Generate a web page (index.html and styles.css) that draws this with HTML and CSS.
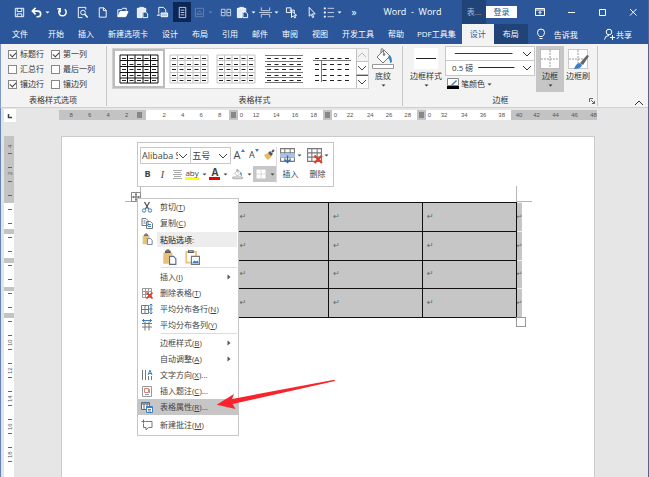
FILE: index.html
```html
<!DOCTYPE html>
<html lang="zh-CN">
<head>
<meta charset="utf-8">
<meta name="viewport" content="width=device-width, initial-scale=1">
<title>Word - Word</title>
<link rel="stylesheet" href="styles.css">
</head>
<body>
<svg class="defs" aria-hidden="true">
  <symbol id="caret" viewBox="0 0 5 3"><path d="M0.5 0.5h4L2.5 2.5z" fill="currentColor"/></symbol>
  <symbol id="chev" viewBox="0 0 10 6"><path d="M1 1l4 4 4-4" fill="none" stroke="currentColor"/></symbol>
  <symbol id="paste" viewBox="0 0 14 14"><path d="M2 3h8v3H7v7H2z" fill="#e8c078"/><path d="M4 3V2h1.300V1h1.500v1H8v1z" fill="none" stroke="#555"/><path d="M7.500 6.500h3.500l2 2v5H7.500z" fill="#fff" stroke="#566f94"/></symbol>
  <symbol id="wpaste" viewBox="0 0 14 14"><path d="M1.500 2.500h9V6H6.500v6.500h-5z" fill="#e4eaf4"/><path d="M4 3V1.500h4V3" fill="none" stroke="#fff"/><path d="M7.500 6.500h3l2 2v4h-5z" fill="#2b579a" stroke="#fff"/></symbol>
  <symbol id="grid" viewBox="0 0 40 30"><path d="M1 1h38v28H1zM1 6.500h38M1 12.500h38M1 18.500h38M1 24h38M8.500 1v28M16 1v28M24 1v28M31.500 1v28" fill="none" stroke="currentColor"/></symbol>
  <symbol id="dashes" viewBox="0 0 40 30"><path d="M3 4.500h37M3 10.500h37M3 15.500h37M3 21.500h37M3 26.500h37" fill="none" stroke="#222" stroke-dasharray="4 3.500"/></symbol>
  <symbol id="bucket" viewBox="0 0 20 16"><path d="M4 9l7-7 6 6-7 7z" fill="#fff" stroke="#777"/><path d="M8 5V2q0-2 2-1l1 5" fill="none" stroke="#777"/><circle cx="11" cy="6.500" r="1.200" fill="#777"/><path d="M16 7q3 1 3 7l-2 1q0-4-2-5z" fill="#3b7fc4"/></symbol>
  <symbol id="tbl" viewBox="0 0 16 16"><path d="M1.500 1.500h13v12h-13zM1.500 5.500h13M1.500 9.500h13M5.500 1.500v12M10.500 1.500v12" fill="#fff" stroke="#777"/></symbol>
  <symbol id="bord" viewBox="0 0 20 20"><path d="M0.500 0.500h19v19H0.500z" fill="#fff" stroke="#999" stroke-dasharray="1 1"/><path d="M10 1v18M1 10h18" stroke="#999" stroke-dasharray="2 1"/></symbol>
</svg>

<div class="app">
  <header class="titlebar">
    <div class="quick">
      <button aria-label="保存"><svg viewBox="0 0 14 14"><path d="M2.500 2.500h9v9h-9z"/><path d="M4.500 2.500v3.500h5V2.500M4.500 11.500v-3h5v3"/></svg></button>
      <button class="split" aria-label="撤消"><svg viewBox="0 0 14 14"><path d="M3 5.500h5.500a3 3 0 0 1 0 6H7M6 2L2.500 5.500 6 9" stroke-width="1.700"/></svg><svg class="caret"><use href="#caret"/></svg></button>
      <button aria-label="重复"><svg viewBox="0 0 14 14"><path d="M4.500 3.500a4 4 0 1 0 5 0M4.500 7V3H1.500" stroke-width="1.600"/></svg></button>
      <button aria-label="打印预览"><svg viewBox="0 0 14 14"><path d="M10.500 4V1.500h-8v11H7"/><circle cx="7.500" cy="7" r="2.500"/><path d="M9.500 9l3 3.500" stroke-width="1.600"/></svg></button>
      <button aria-label="新建"><svg viewBox="0 0 14 14"><path d="M3.500 2h5l2.500 2.500V12H3.500zM8 2v3h3"/></svg></button>
      <button aria-label="打开"><svg viewBox="0 0 14 14"><path d="M2 11.500V4h4l1-1.500h4V5" /><path d="M2 11.500L4.500 6H13l-2.500 5.500z" fill="#fff"/></svg></button>
      <button aria-label="粘贴"><svg><use href="#wpaste"/></svg></button>
      <button aria-label="导出"><svg viewBox="0 0 14 14"><path d="M3 8V1.500h5L10.500 4v3"/><path d="M5.500 7.500h7v4h-7z" fill="#b8c9e4"/><path d="M1 10h3l-1.500-1.500"/></svg></button>
      <button class="pressed" aria-label="页面视图"><svg viewBox="0 0 14 14"><path d="M3.500 1.500h7v11h-7zM5 4.500h4M5 7h4M5 9.500h4" stroke="#c9d3e4"/></svg></button>
      <button class="split dim" aria-label="图片" disabled><svg viewBox="0 0 14 14"><path d="M2.500 2.500h9v9h-9zM4 9l3-4 3 4z"/></svg><svg class="caret"><use href="#caret"/></svg></button>
      <button aria-label="双页"><svg viewBox="0 0 14 14"><path d="M2.500 3.500h4v7h-4zM8.500 3.500h4v7h-4zM3 7h3M9 7h3" stroke="#c9d3e4"/></svg></button>
      <button class="split" aria-label="选择性粘贴"><svg><use href="#wpaste"/></svg><svg class="caret"><use href="#caret"/></svg></button>
      <button class="split" aria-label="分隔符"><svg viewBox="0 0 14 14"><path d="M2.500 1.500V5h9V1.500M2.500 12.500V9h9v3.500M0 7h14" stroke="#c9d3e4"/></svg><svg class="caret"><use href="#caret"/></svg></button>
      <button aria-label="选择对象"><svg viewBox="0 0 14 14"><path d="M1.500 2h5v5h-5zM5 4.500h5V8"/><path d="M7 5.500v7l2-2 1.500 2.500 1-.6L10.300 10H12.500z" fill="#2b579a"/></svg></button>
      <button aria-label="选择"><svg viewBox="0 0 14 14"><path d="M4.500 1.500v9.500l2.200-2 1.500 3.500 1.300-.6L8 8.500h3z"/></svg></button>
      <button class="split" aria-label="项目符号"><svg viewBox="0 0 14 14"><path d="M2 2.500h2M2 7h2M2 11.500h2" stroke-width="2"/><path d="M6 2.500h7M6 7h7M6 11.500h7" stroke="#c9d3e4"/></svg><svg class="caret"><use href="#caret"/></svg></button>
      <button aria-label="更多">»</button>
    </div>
    <h1 class="title">Word&nbsp; -&nbsp; Word</h1>
    <span class="context">表...</span>
    <button class="login">登录</button>
    <div class="window">
      <button aria-label="功能区显示选项"><svg viewBox="0 0 14 14"><path d="M2.500 3.500h9v7h-9zM2.500 5h9M7 9.500V6.500M5.500 8L7 6.500 8.500 8"/></svg></button>
      <button aria-label="最小化"><svg viewBox="0 0 14 14"><path d="M4 7.500h7"/></svg></button>
      <button aria-label="最大化"><svg viewBox="0 0 14 14"><path d="M4.500 4.500h6v6h-6z"/></svg></button>
      <button aria-label="关闭"><svg viewBox="0 0 14 14"><path d="M4 4l6.500 6.500M10.500 4L4 10.500"/></svg></button>
    </div>
  </header>

  <nav class="tabs">
    <a class="file" href="#">文件</a><a href="#">开始</a><a href="#">插入</a><a href="#">新建选项卡</a><a href="#">设计</a><a href="#">布局</a><a href="#">引用</a><a href="#">邮件</a><a href="#">审阅</a><a href="#">视图</a><a href="#">开发工具</a><a href="#">帮助</a><a class="pdf" href="#">PDF工具集</a><a class="active" href="#">设计</a><a class="ctx" href="#">布局</a>
    <a class="tell" href="#"><svg viewBox="0 0 12 12"><path d="M4.500 8.500Q2.500 6.500 2.500 4.500a3.500 3.500 0 0 1 7 0Q9.500 6.500 7.500 8.500zM4.500 10.500h3"/></svg>告诉我</a>
    <a class="share" href="#"><svg viewBox="0 0 12 12"><circle cx="6" cy="4" r="2.800"/><path d="M1.500 11.500Q2 7.500 6 7.500M7 9.500h5M9.500 7v5"/></svg>共享</a>
  </nav>

  <section class="ribbon">
    <div class="group options">
      <div class="checks">
        <label><input type="checkbox" checked>标题行</label><label><input type="checkbox" checked>第一列</label>
        <label><input type="checkbox">汇总行</label><label><input type="checkbox">最后一列</label>
        <label><input type="checkbox" checked>镶边行</label><label><input type="checkbox">镶边列</label>
      </div>
      <p class="caption">表格样式选项</p>
    </div>
    <div class="group styles">
      <div class="body">
        <div class="gallery">
          <button class="thumb on" aria-label="网格型"><svg><use href="#grid"/><use href="#dashes"/></svg></button>
          <button class="thumb light" aria-label="网格型浅色"><svg><use href="#grid"/><use href="#dashes"/></svg></button>
          <button class="thumb light" aria-label="普通表格 1"><svg><use href="#grid"/><use href="#dashes"/></svg></button>
          <button class="thumb" aria-label="普通表格 2"><svg viewBox="0 0 40 30"><path d="M1 1.500h38M1 7.500h38M1 12.500h38M1 18.500h38M1 23.500h38M1 28.500h38" stroke="#777"/><use href="#dashes"/></svg></button>
          <button class="thumb" aria-label="普通表格 3"><svg viewBox="0 0 40 30"><path d="M1 6.500h38M9.500 7v21" stroke="#777"/><use href="#dashes"/></svg></button>
          <div class="scroll">
            <button aria-label="上一行" disabled><svg class="chev up"><use href="#chev"/></svg></button>
            <button aria-label="下一行"><svg class="chev"><use href="#chev"/></svg></button>
            <button class="more" aria-label="其他样式"><svg class="chev"><use href="#chev"/></svg></button>
          </div>
        </div>
        <button class="big"><svg class="pic" viewBox="0 0 24 22"><use href="#bucket" x="2" y="0" width="20" height="16"/><path d="M1.500 16.500h21v4h-21z" fill="#fff" stroke="#999"/></svg>底纹<svg class="caret"><use href="#caret"/></svg></button>
      </div>
      <p class="caption">表格样式</p>
    </div>
    <div class="group borders">
      <div class="body">
        <button class="big wide"><svg class="pic" viewBox="0 0 24 22"><path d="M0 0h24v21H0z" fill="#fff"/><path d="M2 10.500h20" stroke="#222"/></svg>边框样式<svg class="caret"><use href="#caret"/></svg></button>
        <div class="pens">
          <div class="combo"><select aria-label="笔样式"><option></option></select><svg class="line" viewBox="0 0 90 14"><path d="M9 6.500h59" stroke="#333"/></svg><svg class="chev"><use href="#chev"/></svg></div>
          <div class="combo"><select aria-label="笔划粗细"><option>0.5 磅</option></select><svg class="line" viewBox="0 0 90 14"><path d="M33 6.500h37" stroke="#222"/></svg><svg class="chev"><use href="#chev"/></svg></div>
          <button class="pen"><svg viewBox="0 0 12 12"><path d="M.5.5h11v7H.5z" fill="#fff" stroke="#888"/><path d="M0 8h12v3H0z" fill="#000"/><path d="M4 7l5-5 1 1-5 5z" fill="#3b7fc4"/></svg>笔颜色<svg class="caret"><use href="#caret"/></svg></button>
        </div>
        <button class="big on"><svg class="pic" viewBox="0 0 24 22"><use href="#bord" x="2" y="1" width="20" height="20"/></svg>边框<svg class="caret"><use href="#caret"/></svg></button>
        <button class="big"><svg class="pic" viewBox="0 0 24 22"><use href="#bord" x="2" y="1" width="20" height="20"/><path d="M14 15l7-8 2 1-6 9z" fill="#666"/><path d="M8 21q2-6 6-6l2 2q-1 4-8 4z" fill="#3b7fc4"/></svg>边框刷</button>
      </div>
      <p class="caption">边框</p>
      <button class="launch" aria-label="边框和底纹"><svg viewBox="0 0 6 6"><path d="M.5 4V.5H4M2 2l3.500 3.500M5.500 3v2.500H3"/></svg></button>
    </div>
    <button class="collapse" aria-label="折叠功能区"><svg class="chev up"><use href="#chev"/></svg></button>
  </section>

  <main class="work">
    <div class="corner"><svg viewBox="0 0 6 6"><path d="M1.500 1v3.500H5" stroke="#444" stroke-width="1.500" fill="none"/></svg></div>
    <div class="hruler">
      <div class="seg grey first"><i>8</i><i>6</i><i>4</i><i>2</i></div>
      <div class="seg short"><i>2</i><i>4</i><i>6</i><i>8</i></div><b></b>
      <div class="seg"><i>0</i><i>12</i><i>14</i><i>16</i><i>18</i></div><b></b>
      <div class="seg"><i>0</i><i>22</i><i>24</i><i>26</i><i>28</i></div><b></b>
      <div class="seg"><i>0</i><i>32</i><i>34</i><i>36</i><i>38</i></div>
      <div class="seg grey last"><i>40</i><i>42</i><i>44</i><i>46</i><i>48</i></div>
    </div>
    <svg class="vruler" width="10" height="341">
      <path d="M0 0h10v341H0z" fill="#fff"/>
      <path d="M0 0h10v67H0zM0 93h10v5H0zM0 122h10v5H0zM0 151h10v4H0zM0 177h10v5H0z" fill="#c3c3c3"/>
      <path d="M6 17v309" stroke="#666" stroke-width="4" stroke-dasharray="1 13"/>
      <g class="vnum">
        <path d="M2 4h8v10H2zM2 32h8v10H2z" fill="#c3c3c3"/>
        <text transform="translate(8 12) rotate(-90)">4</text><text transform="translate(8 39) rotate(-90)">2</text>
        <text transform="translate(8 210) rotate(-90)">10</text><text transform="translate(8 238) rotate(-90)">12</text><text transform="translate(8 266) rotate(-90)">14</text><text transform="translate(8 294) rotate(-90)">16</text><text transform="translate(8 322) rotate(-90)">18</text>
      </g>
    </svg>
    <article class="page">
      <div class="sheet">
        <table aria-label="表格">
          <tr><td>↵</td><td>↵</td><td>↵</td><td>↵</td><td class="end">↵</td></tr>
          <tr><td>↵</td><td>↵</td><td>↵</td><td>↵</td><td class="end">↵</td></tr>
          <tr><td>↵</td><td>↵</td><td>↵</td><td>↵</td><td class="end">↵</td></tr>
          <tr><td>↵</td><td>↵</td><td>↵</td><td>↵</td><td class="end">↵</td></tr>
        </table>
        <svg class="crop left" viewBox="0 0 16 16"><path d="M15.500 0v15.500H0"/></svg>
        <svg class="crop right" viewBox="0 0 16 16"><path d="M.5 0v15.500H16"/></svg>
        <svg class="move" viewBox="0 0 10 10"><path d="M.5.500h9v9h-9z" fill="#fff" stroke="#888"/><path d="M5 2v6M2 5h6" stroke="#444" stroke-width=".8"/><path d="M5 1l1.300 1.500H3.700zM5 9L3.700 7.500h2.600zM1 5l1.500-1.300v2.600zM9 5L7.500 3.700v2.600z" fill="#444"/></svg>
        <span class="resize"></span>
      </div>

      <div class="mini">
        <div class="tools">
          <div class="row">
            <div class="combo font"><select aria-label="字体"><option>Alibaba S</option></select><svg class="chev"><use href="#chev"/></svg></div>
            <div class="combo size"><select aria-label="字号"><option>五号</option></select><svg class="chev"><use href="#chev"/></svg></div>
            <button class="grow">A<svg viewBox="0 0 4 3"><path d="M0 3l2-3 2 3z" fill="#3b7fc4"/></svg></button>
            <button class="grow small">A<svg viewBox="0 0 4 3"><path d="M0 0h4L2 3z" fill="#3b7fc4"/></svg></button>
            <button aria-label="格式刷"><svg viewBox="0 0 12 12"><path d="M1 6l4-2 4 3-4 4q-2-1-4-5z" fill="#e8b96a"/><path d="M5 4l2-2 3 3-2 2z" fill="#555"/><path d="M9 3l2-2" stroke="#555" stroke-width="2"/></svg></button>
          </div>
          <div class="row">
            <button class="bold">B</button><button class="ital">I</button>
            <button aria-label="居中"><svg viewBox="0 0 12 12"><path d="M2 2.500h9M3 4.500h7M2 6.500h9M3 8.500h7M2 10.500h9" stroke="#aaa"/></svg></button>
            <button class="pair mark"><span>aby</span><svg class="caret"><use href="#caret"/></svg></button>
            <button class="pair red"><span>A</span><svg class="caret"><use href="#caret"/></svg></button>
            <button class="pair" aria-label="底纹"><svg viewBox="0 0 14 12"><use href="#bucket" width="13" height="9"/><path d="M1 9.500h11v2H1z" fill="#fff" stroke="#999"/></svg><svg class="caret"><use href="#caret"/></svg></button>
            <button class="pair on" aria-label="边框"><svg viewBox="0 0 12 12"><use href="#bord" x="1" y="1" width="10" height="10"/></svg><svg class="caret"><use href="#caret"/></svg></button>
          </div>
        </div>
        <button class="stack"><span><svg viewBox="0 0 16 16"><use href="#tbl"/><path d="M1 6h14v4H1z" fill="#a9c4e6"/><path d="M8 8v6M5.500 12L8 14.500 10.500 12" stroke="#2b6cb8" stroke-width="1.400" fill="none"/></svg><svg class="caret"><use href="#caret"/></svg></span>插入</button>
        <button class="stack"><span><svg viewBox="0 0 16 16"><use href="#tbl"/><path d="M8 8l7 7M15 8l-7 7" stroke="#d5412e" stroke-width="2"/></svg><svg class="caret"><use href="#caret"/></svg></span>删除</button>
      </div>

      <ul class="menu">
        <li><svg viewBox="0 0 12 12"><path d="M3.500 1l4 7M8.500 1l-4 7" stroke="#555" stroke-width="1.300"/><circle cx="3" cy="9.500" r="1.700" stroke="#3b7fc4"/><circle cx="9" cy="9.500" r="1.700" stroke="#3b7fc4"/></svg><button>剪切(<u>T</u>)</button></li>
        <li><svg viewBox="0 0 12 12"><path d="M1 1.500h4l2 2v5H1zM5.500 4.500h4l2 2v5h-6z" fill="#fff" stroke="#777"/><path d="M2.500 4h2M2.500 6h2M7 7.500h3M7 9.500h3" stroke="#3b7fc4"/></svg><button>复制(<u>C</u>)</button></li>
        <li class="head"><svg><use href="#paste"/></svg><strong>粘贴选项:</strong></li>
        <li class="pastes"><button aria-label="保留源格式"><svg><use href="#paste"/></svg></button><button aria-label="图片"><svg viewBox="0 0 14 14"><path d="M2 2.500h8.500V12H2z" fill="#fff" stroke="#e8c078" stroke-width="1.500"/><path d="M4 3V1.500h4V3z" stroke="#555" fill="#fff"/><path d="M6.500 6.500h7v7h-7z" fill="#fff" stroke="#777"/><path d="M7 12.500l2-2.500 1.500 1L12 10l1 2.500z" fill="#3b7fc4"/></svg></button></li>
        <li class="sep"></li>
        <li><button>插入(<u>I</u>)</button><svg class="sub" viewBox="0 0 4 6"><path d="M.5.500L3.500 3 .500 5.500z"/></svg></li>
        <li><svg viewBox="0 0 12 12"><path d="M1.500 1.500h9v9h-9zM1.500 4.500h9M1.500 7.500h9M4.500 1.500v9M7.500 1.500v9" stroke="#999"/><path d="M5.500 5.500l6 6M11.500 5.500l-6 6" stroke="#d5412e" stroke-width="1.700"/></svg><button>删除表格(<u>T</u>)</button></li>
        <li><svg viewBox="0 0 12 12"><path d="M.5 2.500h7v8h-7zM.5 6.500h7M4 2.500v8" stroke="#777"/><path d="M10 1v10M8.500 2.500L10 1l1.500 1.500M8.500 9.500L10 11l1.500-1.500M7.500 6h4" stroke="#3b7fc4"/></svg><button>平均分布各行(<u>N</u>)</button></li>
        <li><svg viewBox="0 0 12 12"><path d="M1 4.500h10M1 8h10M4 2.500v9M8 2.500v9" stroke="#777"/><path d="M1 1.500h10M2.500 0v3M9.500 0v3" stroke="#3b7fc4"/></svg><button>平均分布各列(<u>Y</u>)</button></li>
        <li class="sep"></li>
        <li><button>边框样式(<u>B</u>)</button><svg class="sub" viewBox="0 0 4 6"><path d="M.5.500L3.500 3 .500 5.500z"/></svg></li>
        <li><button>自动调整(<u>A</u>)</button><svg class="sub" viewBox="0 0 4 6"><path d="M.5.500L3.500 3 .500 5.500z"/></svg></li>
        <li><svg viewBox="0 0 12 12"><path d="M1.500 1v10M4.500 1v10M7.500 7v4M10.500 7v4" stroke="#777"/><path d="M7 6L9 1l2 5M7.500 4.500h3" stroke="#3b7fc4"/></svg><button>文字方向(<u>X</u>)...</button></li>
        <li><svg viewBox="0 0 12 12"><path d="M1.500 1.500h9v10h-9z" stroke="#999"/><path d="M3.500 3.500h4v4h-4z" stroke="#d58478"/><path d="M4 9.500h4M8.500 4v4" stroke="#7ba3cf"/></svg><button>插入题注(<u>C</u>)...</button></li>
        <li class="on"><svg viewBox="0 0 12 12"><path d="M.5 1.500h8v7h-8zM.5 3h8M3 3v5M6 3v5" stroke="#666" fill="#fff"/><path d="M1 2h7" stroke="#3b7fc4"/><path d="M5.500 5.500h6v6h-6z" fill="#fff" stroke="#3b7fc4"/><path d="M6 6.500h5" stroke="#3b7fc4"/><path d="M7 8.500h3M7 10h3" stroke="#777"/></svg><button>表格属性(<u>R</u>)...</button></li>
        <li class="sep plain"></li>
        <li><svg viewBox="0 0 12 12"><path d="M5 2.500h6v6H7.500l-2.500 2.500V8.500H2.500V5" stroke="#777"/><path d="M2.500.500v4M.5 2.500h4" stroke="#3b7fc4"/></svg><button>新建批注(<u>M</u>)</button></li>
      </ul>

      <svg class="arrow" viewBox="0 0 120 32"><path d="M.7 25.700L18 15l-2 5L118.300.700l.7 1.300L16.500 25l3 5z" fill="#f8232d"/></svg>
    </article>
  </main>
</div>
</body>
</html>
```
FILE: styles.css
```css
* { box-sizing: border-box; }
body {
  margin: 0;
  font: 8px/12px "Open Sans", "Noto Sans CJK SC", sans-serif;
  color: #333;
}
button, select, input { font: inherit; color: inherit; margin: 0; }
button {
  border: 0;
  padding: 0;
  background: none;
  display: flex;
  align-items: center;
  justify-content: center;
}
a { color: inherit; text-decoration: none; }
svg { display: block; flex: none; }
.defs { width: 0; height: 0; position: absolute; }
.caret { width: 5px; height: 3px; }
.chev { width: 10px; height: 6px; }
.up { transform: rotate(180deg); }

.app {
  min-height: 100vh;
  display: flex;
  flex-direction: column;
  border-right: 1px solid #3c68ac;
  background: #e6e6e6;
}

/* Title bar */
.titlebar {
  height: 24px;
  display: flex;
  align-items: center;
  background: #2b579a;
  color: #fff;
}
.quick { display: flex; gap: 2px; padding-left: 10px; }
.quick button { width: 18px; height: 20px; font-size: 10px; }
.quick .split { width: 21px; justify-content: flex-start; gap: 2px; }
.quick svg, .window svg { width: 14px; height: 14px; fill: none; stroke: #fff; }
.quick svg { width: 13px; height: 13px; }
.quick .caret { width: 5px; height: 3px; stroke: none; }
.quick .pressed { background: #0c2656; }
.quick .dim { opacity: .25; }
.title { flex: 1; margin: 0; text-align: center; font-size: 9px; font-weight: 400; white-space: nowrap; }
.context { width: 24px; line-height: 24px; text-align: center; background: #204478; color: #a9bcda; }
.login { width: 31px; height: 12px; background: #fff; color: #2b579a; margin-right: 7px; }
.window { display: flex; }
.window button { width: 31px; height: 24px; }

/* Tabs */
.tabs {
  height: 20px;
  display: flex;
  line-height: 19px;
  background: #2b579a;
  color: #fff;
  padding-left: 5px;
  white-space: nowrap;
}
.tabs a { padding: 0 7px; }
.tabs .file { margin-right: 6px; }
.tabs .pdf { padding: 0 6px; }
.tabs .active { padding: 0 8px; background: #f3f3f3; color: #2b579a; }
.tabs .ctx { padding: 0 9px; background: #204478; }
.tabs svg { width: 12px; height: 12px; fill: none; stroke: #fff; }
.tell, .share { display: flex; align-items: center; gap: 7px; }
.tabs .share { margin-left: auto; padding-right: 16px; gap: 1px; }

/* Ribbon */
.ribbon {
  height: 64px;
  display: flex;
  background: #f3f3f3;
  border-left: 1px solid #7d9cc9;
  border-bottom: 1px solid #cfcfcf;
  padding-top: 2px;
}
.group {
  position: relative;
  display: flex;
  flex-direction: column;
  justify-content: space-between;
  padding: 0 6px 0 5px;
  margin-bottom: 1px;
  border-right: 1px solid #c8c8c8;
}
.caption { margin: 0; text-align: center; }
.body { display: flex; height: 46px; }
.checks { display: grid; grid-template-columns: 43px auto; gap: 3px 0; width: 94px; padding: 2px 0 0 2px; }
.checks label { display: flex; align-items: center; gap: 3px; height: 12px; white-space: nowrap; }
.checks input {
  appearance: none;
  width: 9px;
  height: 9px;
  border: 1px solid #888;
  background: #fff;
  display: grid;
  place-items: center;
}
.checks input:checked::before {
  content: "";
  width: 5px;
  height: 3px;
  border: solid #444;
  border-width: 0 0 1px 1px;
  transform: rotate(-45deg);
}
.gallery { display: flex; width: 257px; height: 41px; margin-top: 2px; background: #fff; border: 1px solid #d0d0d0; }
.thumb { flex: 1; color: #111; }
.thumb svg { width: 40px; height: 30px; fill: none; }
.thumb.light { color: #c4c4c4; }
.thumb.on { border: 2px solid #bdbdbd; }
.scroll { width: 12px; display: flex; flex-direction: column; }
.scroll button { flex: 1; border-left: 1px solid #c0c0c0; border-bottom: 1px solid #c0c0c0; background: #fff; color: #444; }
.scroll button:disabled { color: #bbb; background: #f3f3f3; }
.scroll .more { border-top: 1px solid #555; border-bottom: 0; }
.styles { padding-right: 5px; }
.big { width: 28px; flex-direction: column; justify-content: flex-start; gap: 0; padding-top: 2px; white-space: nowrap; }
.big .pic { width: 24px; height: 22px; }
.big .caret { margin-top: 2px; }
.big.wide { width: 34px; margin-right: 2px; }
.big.on { background: #c6c6c6; margin-left: 1px; }
.combo { display: grid; align-items: center; background: #fff; border: 1px solid #c8c8c8; }
.combo > * { grid-area: 1 / 1; }
.combo select { appearance: none; width: 100%; height: 100%; border: 0; border-radius: 0; padding: 0 0 0 6px; background: transparent; }
.combo .chev { justify-self: end; margin-right: 2px; }
.combo svg { pointer-events: none; }
.pens { width: 90px; }
.pens .combo { height: 15px; }
.pens .combo + .combo { border-top: 0; }
.line { width: 88px; height: 14px; }
.pen { height: 16px; gap: 2px; padding-left: 2px; }
.pen svg:first-child { width: 12px; height: 12px; }
.borders { padding-left: 6px; padding-right: 5px; }
.launch { position: absolute; right: 2px; bottom: 2px; }
.launch svg { width: 6px; height: 6px; fill: none; stroke: #666; }
.collapse { margin: auto 4px 1px auto; }

/* Rulers and workspace */
.work {
  flex: 1;
  display: grid;
  grid-template-columns: 12px 1fr;
  grid-template-rows: 28px 1fr;
  column-gap: 1px;
  padding: 0 9px 0 3px;
  border-left: 1px solid #6482b5;
  box-shadow: inset 3px 0 #dfe4f0;
  color: #555;
}
.corner { width: 12px; height: 13px; margin-top: 1px; background: #fff; display: grid; place-items: center; }
.corner svg { width: 6px; height: 6px; }
.hruler { display: flex; justify-content: center; height: 10px; margin-top: 2px; font: 6px/10px "Liberation Sans", sans-serif; }
.hruler i { font-style: normal; text-align: center; }
.hruler b { width: 9px; border: solid #c3c3c3; border-width: 2px; background: #888; }
.seg { width: 85px; display: grid; grid-template-columns: 7px 22px repeat(3, 1fr); background: #fff; }
.seg.short { width: 83px; grid-template-columns: repeat(4, 1fr); padding-left: 9px; }
.seg.grey { background: #c3c3c3; }
.seg.first { width: 87px; grid-template-columns: repeat(4, 1fr); padding: 0 6px 0 3px; border-right: 4px solid #c3c3c3; background: linear-gradient(#888, #888) right 0 center / 5px 6px no-repeat #c3c3c3; }
.seg.last { width: 86px; grid-template-columns: 16px repeat(4, 19px); }
.vruler { grid-column: 1; }
.vnum { font: 6px "Liberation Sans", sans-serif; fill: #555; }
.page {
  position: relative;
  width: 534px;
  margin: 0 auto;
  padding: 65px 0 0 79px;
  background: #fff;
  border: solid #cacaca;
  border-width: 1px 1px 0;
}
.sheet { position: relative; width: max-content; }
.sheet table { border-collapse: collapse; table-layout: fixed; width: 381px; height: 116px; font: 8px/10px "DejaVu Sans", sans-serif; color: #666; }
.sheet td { border: 1px solid #111; background: #c6c6c6; padding: 0 0 0 4px; }
.sheet .end { width: 6px; padding: 0; border-color: #eee; border-left-color: #111; border-right: 0; overflow: hidden; font-size: 7px; }
.crop { position: absolute; top: -16px; width: 16px; height: 16px; fill: none; stroke: #b5b5b5; }
.crop.left { left: -16px; }
.crop.right { right: -10px; }
.move { position: absolute; left: -10px; top: -10px; width: 10px; height: 10px; }
.resize { position: absolute; right: -4px; top: 115px; width: 10px; height: 10px; border: 1px solid #999; background: #fff; }

/* Floating format bar */
.mini {
  position: absolute;
  left: 75px;
  top: 5px;
  display: flex;
  width: 197px;
  height: 45px;
  padding: 4px 0 3px 2px;
  background: #fff;
  border: 1px solid #c6c6c6;
  color: #444;
}
.tools { width: 137px; border-right: 1px solid #ddd; }
.row { display: flex; height: 19px; }
.row button { width: 15px; height: 16px; }
.row button > svg:not(.caret) { width: 12px; height: 12px; }
.row .combo { height: 17px; font-size: 9px; overflow: hidden; }
.row .combo select { padding-left: 1px; }
.row .font { width: 52px; }
.row .font select { padding-right: 12px; text-overflow: clip; }
.row .size { width: 40px; border-left: 0; margin-right: 1px; }
.row .grow { align-items: baseline; font-size: 11px; line-height: 16px; }
.row .grow.small { font-size: 9px; }
.row .grow svg:not(.caret) { width: 4px; height: 3px; align-self: flex-start; margin-top: 2px; }
.bold { font-size: 9px; font-weight: 700; }
.ital { font: italic 10px "Liberation Serif", serif; }
.row .pair { width: 23px; gap: 3px; }
.mark span { line-height: 9px; border-bottom: 3px solid #ff0; }
.red span { width: 11px; line-height: 9px; font-size: 10px; font-weight: 700; border-bottom: 3px solid #e00; }
.row .on { background: #c6c6c6; }
.stack { width: 27px; height: 33px; flex-direction: column; justify-content: space-between; }
.stack span { display: flex; align-items: center; gap: 1px; }
.stack span svg:first-child { width: 17px; height: 17px; }

/* Context menu */
.menu {
  position: absolute;
  left: 75px;
  top: 61px;
  width: 102px;
  margin: 0;
  padding: 0 1px 2px;
  list-style: none;
  background: #fff;
  border: 1px solid #c6c6c6;
  color: #444;
}
.menu li { height: 16px; display: grid; grid-template-columns: 18px 1fr 10px; align-items: center; }
.menu li > svg:first-child { width: 12px; height: 12px; margin-left: 2px; fill: none; }
.menu li > button, .menu strong { grid-column: 2; padding-left: 3px; justify-self: start; white-space: nowrap; }
.menu .head strong { grid-column: 2 / 4; justify-self: stretch; line-height: 15px; background: #ededed; font-weight: 500; }
.menu .sub { width: 4px; height: 6px; fill: #555; }
.menu .pastes { height: 20px; display: flex; gap: 4px; padding-left: 19px; }
.pastes svg { width: 16px; height: 16px; fill: none; }
.menu .sep { height: 2px; margin-left: 22px; border-top: 1px solid #ddd; }
.menu .plain { border: 0; }
.menu .on { background: #c6c6c6; margin: 0 -1px; padding: 0 1px; }
.arrow { position: absolute; left: 154px; top: 242px; width: 120px; height: 32px; pointer-events: none; }
```
